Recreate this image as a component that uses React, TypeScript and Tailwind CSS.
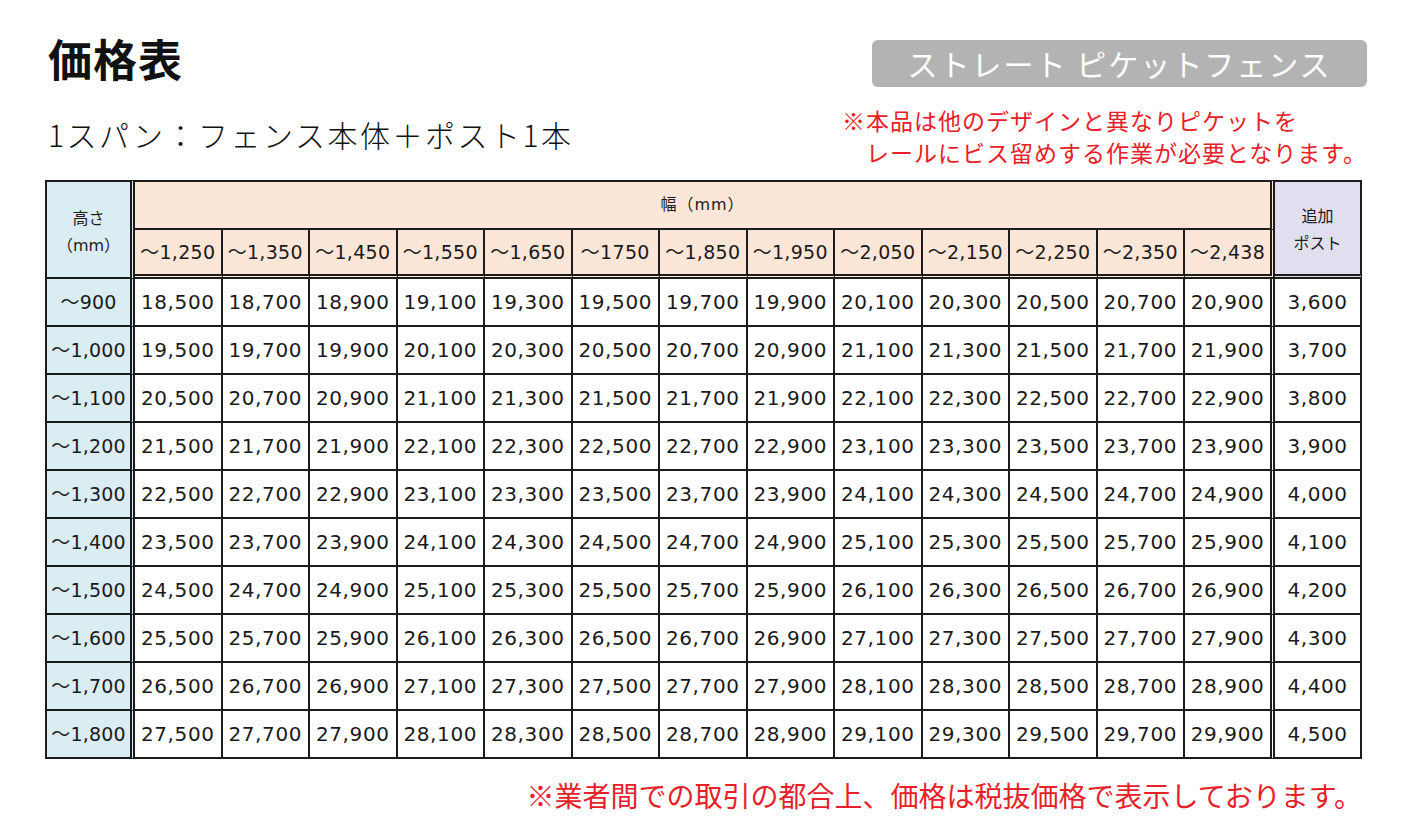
import React from 'react';

const widthHeads = [
  '～1,250', '～1,350', '～1,450', '～1,550', '～1,650', '～1750', '～1,850',
  '～1,950', '～2,050', '～2,150', '～2,250', '～2,350', '～2,438',
];

const heightHeads = [
  '～900', '～1,000', '～1,100', '～1,200', '～1,300',
  '～1,400', '～1,500', '～1,600', '～1,700', '～1,800',
];

const fmt = (n: number) => n.toLocaleString('en-US');

export default function App() {
  return (
    <div className="w-[1408px] min-h-[840px] bg-white pl-[45px] pr-[41px] pt-[34px] [font-family:'Noto_Sans_CJK_JP',sans-serif] text-[#111]">
      {/* top area */}
      <div className="flex justify-between h-[146px]">
        <div>
          <h1 className="pl-[3px] text-[44px] leading-[48px] font-bold tracking-[1px]">価格表</h1>
          <p className="mt-[33px] pl-[3px] text-[30px] leading-[38px] font-light tracking-[2.5px]">
            1スパン：フェンス本体＋ポスト1本
          </p>
        </div>
        <div className="flex flex-col items-end mt-[6px]">
          <div className="w-[495px] h-[47px] rounded-[6px] bg-[#b3b3b3] flex items-center justify-center text-white text-[30px] tracking-[2px]">
            ストレート ピケットフェンス
          </div>
          <div className="mt-[17px] text-[#e62129] text-[23px] leading-[32px] tracking-[1px]">
            <p>※本品は他のデザインと異なりピケットを</p>
            <p className="pl-[24px]">レールにビス留めする作業が必要となります。</p>
          </div>
        </div>
      </div>

      {/* price table */}
      <table className="table-fixed w-[1317px] border-separate border-spacing-0 [font-family:'DejaVu_Sans','Noto_Sans_CJK_JP',sans-serif] text-[#1a1a1a]">
        <colgroup>
          <col className="w-[90px]" />
          {widthHeads.map((w, i) => (
            <col key={w} className={i === 12 ? 'w-[90px]' : 'w-[87.5px]'} />
          ))}
          <col className="w-[87px]" />
        </colgroup>
        <thead>
          <tr className="h-[50px]">
            <th
              rowSpan={2}
              className="border-double border-[#1c1c1c] border-t-2 border-l-2 border-r-[5px] border-b-2 bg-[#daedf3] font-normal text-[16px] leading-[27px] pt-[4px]"
            >
              高さ<br />（mm）
            </th>
            <th
              colSpan={13}
              className="border-double border-[#1c1c1c] border-t-2 border-r-[5px] border-b-2 bg-[#fbe6d7] font-normal text-[16px] tracking-[1px]"
            >
              幅（mm）
            </th>
            <th
              rowSpan={2}
              className="border-double border-[#1c1c1c] border-t-2 border-r-2 border-b-[5px] bg-[#e1dfef] font-normal text-[16px] leading-[27px] pt-[4px]"
            >
              追加<br />ポスト
            </th>
          </tr>
          <tr className="h-[49px]">
            {widthHeads.map((w, i) => (
              <th
                key={w}
                className={`border-double border-[#1c1c1c] border-b-[5px] bg-[#fbe6d7] font-normal text-[19px] tracking-[0.3px] whitespace-nowrap ${i === 12 ? 'border-r-[5px]' : 'border-r-2'}`}
              >
                {w}
              </th>
            ))}
          </tr>
        </thead>
        <tbody>
          {heightHeads.map((h, r) => (
            <tr key={h} className="h-[48px]">
              <td className="border-double border-[#1c1c1c] border-l-2 border-r-[5px] border-b-2 bg-[#daedf3] text-center text-[19px] tracking-[0.2px] whitespace-nowrap">
                {h}
              </td>
              {widthHeads.map((w, c) => (
                <td
                  key={w}
                  className={`border-double border-[#1c1c1c] border-b-2 text-center text-[20px] tracking-[0.6px] whitespace-nowrap ${c === 12 ? 'border-r-[5px]' : 'border-r-2'}`}
                >
                  {fmt(18500 + r * 1000 + c * 200)}
                </td>
              ))}
              <td className="border-double border-[#1c1c1c] border-r-2 border-b-2 text-center text-[20px] tracking-[0.6px]">
                {fmt(3600 + r * 100)}
              </td>
            </tr>
          ))}
        </tbody>
      </table>

      <p className="mt-[18px] pr-[5px] text-right text-[#e62129] text-[28px] leading-[36px]">
        ※業者間での取引の都合上、価格は税抜価格で表示しております。
      </p>
    </div>
  );
}
